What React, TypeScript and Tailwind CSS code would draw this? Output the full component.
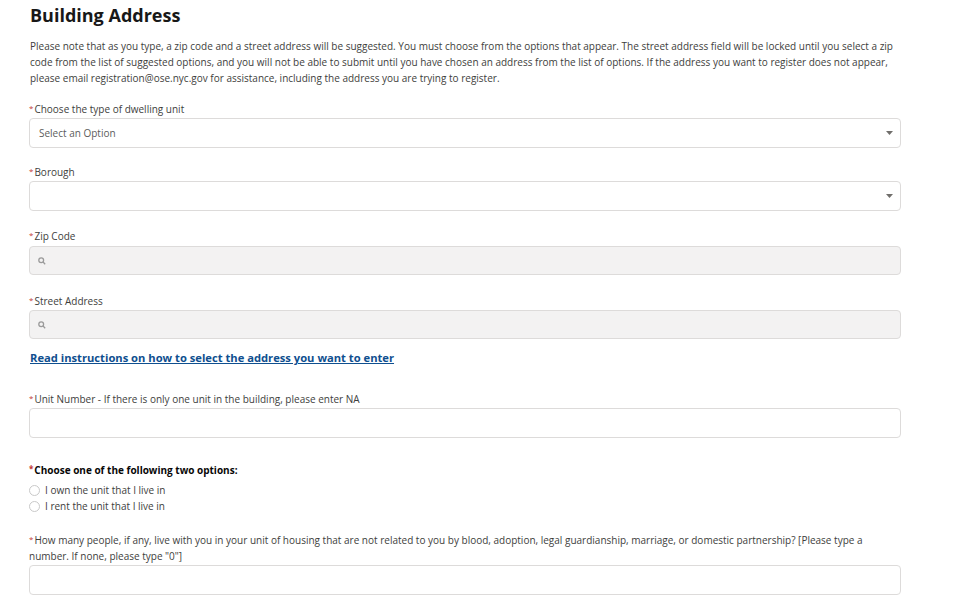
import React from "react";

function Req() {
  return <span className="relative -top-[2px] mr-[1px] text-[8px] leading-none text-[#c23934]">*</span>;
}

function Label({ children, className = "" }: { children: React.ReactNode; className?: string }) {
  return (
    <div className={`h-[16px] text-[10px] leading-[16px] text-[#3e3e3c] ${className}`}>
      <Req />
      {children}
    </div>
  );
}

function Caret() {
  return (
    <svg width="7" height="4" viewBox="0 0 7 4" className="fill-[#706e6b]">
      <path d="M0 0h7L3.5 4z" />
    </svg>
  );
}

function SelectBox({ value }: { value?: string }) {
  return (
    <div className="flex h-[30px] items-center justify-between rounded-[4px] border border-[#dddbda] bg-white pl-[9px] pr-[7px] text-[10px]">
      <span className="text-[#5c5c5c]">{value}</span>
      <Caret />
    </div>
  );
}

function SearchBox() {
  return (
    <div className="flex h-[29px] items-center rounded-[4px] border border-[#dddbda] bg-[#f3f2f2] pl-[8px]">
      <svg width="8" height="8" viewBox="0 0 10 10" fill="none" stroke="#9a9a9a" strokeWidth="1.6">
        <circle cx="4" cy="4" r="3" />
        <path d="M6.3 6.3L9 9" />
      </svg>
    </div>
  );
}

function TextBox() {
  return <div className="h-[30px] rounded-[4px] border border-[#dddbda] bg-white" />;
}

function Radio({ children }: { children: React.ReactNode }) {
  return (
    <div className="flex h-[16px] items-center text-[10px] text-[#3e3e3c]">
      <span className="mr-[5px] h-[11px] w-[11px] rounded-full border border-[#c9c9c9] bg-white" />
      {children}
    </div>
  );
}

export default function App() {
  return (
    <div
      className="min-h-[603px] w-[960px] bg-white"
      style={{ fontFamily: '"Open Sans", "Noto Sans", sans-serif' }}
    >
      <div className="ml-[29px] w-[872px] pt-[3px]">
        <h1 className="pl-[1px] text-[18px] font-bold leading-[24px] text-[#181818]">Building Address</h1>

        <p className="mt-[11px] pl-[1px] text-[10px] leading-[16px] text-[#3e3e3c]">
          Please note that as you type, a zip code and a street address will be suggested. You must choose from the options that appear. The street address field will be locked until you select a zip
          <br />
          code from the list of suggested options, and you will not be able to submit until you have chosen an address from the list of options. If the address you want to register does not appear,
          <br />
          please email registration@ose.nyc.gov for assistance, including the address you are trying to register.
        </p>

        <Label className="mt-[15px]">Choose the type of dwelling unit</Label>
        <div className="mt-[1px]">
          <SelectBox value="Select an Option" />
        </div>

        <Label className="mt-[16px]">Borough</Label>
        <div className="mt-[1px]">
          <SelectBox />
        </div>

        <Label className="mt-[17px]">Zip Code</Label>
        <div className="mt-[2px]">
          <SearchBox />
        </div>

        <Label className="mt-[18px]">Street Address</Label>
        <div className="mt-[1px]">
          <SearchBox />
        </div>

        <a
          href="#"
          className="mt-[10px] block pl-[1px] text-[11.2px] font-bold leading-[18px] text-[#0f4f8f] underline"
        >
          Read instructions on how to select the address you want to enter
        </a>

        <Label className="mt-[24px]">Unit Number - If there is only one unit in the building, please enter NA</Label>
        <div className="mt-[1px]">
          <TextBox />
        </div>

        <div className="mt-[24px] h-[16px] text-[10px] font-bold leading-[16px] text-[#080707]">
          <Req />
          Choose one of the following two options:
        </div>
        <div className="mt-[4px]">
          <Radio>I own the unit that I live in</Radio>
          <Radio>I rent the unit that I live in</Radio>
        </div>

        <div className="mt-[18px] text-[10px] leading-[16px] text-[#3e3e3c]">
          <Req />
          How many people, if any, live with you in your unit of housing that are not related to you by blood, adoption, legal guardianship, marriage, or domestic partnership? [Please type a
          <br />
          number. If none, please type "0"]
        </div>
        <div className="mt-[1px]">
          <TextBox />
        </div>
      </div>
    </div>
  );
}
